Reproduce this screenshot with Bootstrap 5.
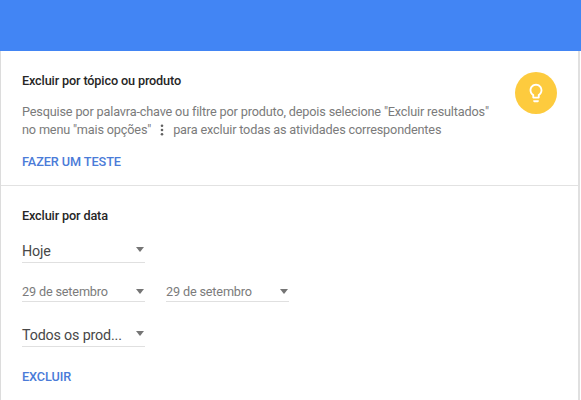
<!DOCTYPE html>
<html lang="pt-BR">
<head>
<meta charset="utf-8">
<meta name="viewport" content="width=device-width, initial-scale=1">
<title>Excluir atividades</title>
<link href="https://cdn.jsdelivr.net/npm/bootstrap@5.3.0/dist/css/bootstrap.min.css" rel="stylesheet">
<style>
body{font-family:Roboto,"Noto Sans",sans-serif;font-size:12.7px;line-height:18px;color:#7b7b7b;background:#fff;height:400px;overflow:hidden}
.topbar{height:51px;background:#4285f4}
.panel{height:349px;border-left:1px solid #dcdcdc;border-right:2px solid #e0e0e0;margin-right:1px}
.topic{height:135px;padding:21px 21px 0;border-bottom:1px solid #e2e2e2}
.dates{padding:21px 21px 0}
.heading{font-size:12.7px;font-weight:500;line-height:18px;letter-spacing:-.15px;color:#262626;white-space:nowrap}
.copy{width:470px;margin-top:13px;line-height:18px;letter-spacing:-.168px;white-space:nowrap}
.copy svg{margin-bottom:1px}
.action{font-size:12.7px;font-weight:500;line-height:18px;letter-spacing:-.08px;color:#4a7bd8;text-decoration:none}
.topic .action{margin-top:14px}
.dates .action{margin-top:21px}
.tip{width:42px;height:42px;background:#fdcb3e}
.picker{width:123px;border:0;border-bottom:1px solid #e0e0e0;background:none;padding:0;color:#7b7b7b;text-align:left;white-space:nowrap;letter-spacing:-.17px}
.picker-lg{height:24px;margin-top:14px;font-size:14.3px;color:#484848}
.picker-sm{height:20px}
.dates-range{margin-top:19px;gap:21px}
.dates-range + .picker-lg{margin-top:21px}
.picker::after{content:"";margin-right:1px;border:4.5px solid transparent;border-top:5px solid #757575;border-bottom:0}
.picker-lg::after{margin-bottom:3px}
</style>
<script src="https://cdn.jsdelivr.net/npm/bootstrap@5.3.0/dist/js/bootstrap.bundle.min.js"></script>
</head>
<body>
<header class="topbar"></header>
<main class="panel">
  <section class="topic d-flex justify-content-between align-items-start">
    <div>
      <h2 class="heading mb-0">Excluir por tópico ou produto</h2>
      <p class="copy mb-0">Pesquise por palavra-chave ou filtre por produto, depois selecione "Excluir resultados"<br>no menu "mais opções" <svg class="mx-1" width="8" height="12" viewBox="0 0 8 12" fill="#616161"><circle cx="4" cy="1.800" r="1.300"/><circle cx="4" cy="6" r="1.300"/><circle cx="4" cy="10.200" r="1.300"/></svg> para excluir todas as atividades correspondentes</p>
      <a class="action d-inline-block" href="#">FAZER UM TESTE</a>
    </div>
    <div class="tip rounded-circle d-flex align-items-center justify-content-center flex-shrink-0">
      <svg width="22" height="22" viewBox="0 0 24 24" fill="#fff"><path d="M9 21c0 .55.45 1 1 1h4c.55 0 1-.45 1-1v-1H9v1zm3-19C8.140 2 5 5.140 5 9c0 2.380 1.190 4.470 3 5.740V17c0 .55.45 1 1 1h6c.55 0 1-.45 1-1v-2.260c1.810-1.270 3-3.360 3-5.740 0-3.860-3.140-7-7-7zm2.850 11.100l-.85.6V16h-4v-2.300l-.85-.6C7.800 12.160 7 10.630 7 9c0-2.760 2.240-5 5-5s5 2.240 5 5c0 1.630-.8 3.160-2.150 4.100z"/></svg>
    </div>
  </section>
  <section class="dates">
    <h2 class="heading mb-0">Excluir por data</h2>
    <button class="picker picker-lg d-flex justify-content-between align-items-center" type="button">Hoje</button>
    <div class="dates-range d-flex">
      <button class="picker picker-sm d-flex justify-content-between align-items-center" type="button">29 de setembro</button>
      <button class="picker picker-sm d-flex justify-content-between align-items-center" type="button">29 de setembro</button>
    </div>
    <button class="picker picker-lg d-flex justify-content-between align-items-center" type="button">Todos os prod...</button>
    <a class="action d-inline-block" href="#">EXCLUIR</a>
  </section>
</main>
</body>
</html>
